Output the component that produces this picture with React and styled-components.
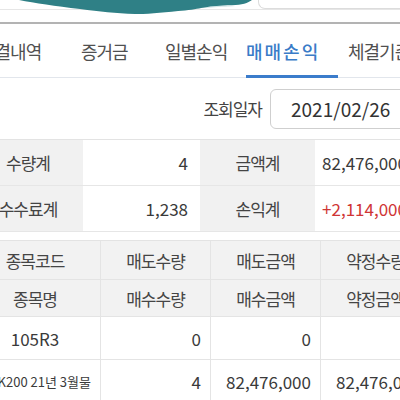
import React from 'react';
import styled, { createGlobalStyle } from 'styled-components';

const GlobalStyle = createGlobalStyle`
  html, body {
    margin: 0;
    padding: 0;
    background: #fff;
  }
  body {
    font-family: "Noto Sans CJK KR", "Noto Sans", sans-serif;
    color: #3a3a3a;
  }
`;

const Page = styled.div`
  width: 400px;
  height: 400px;
  overflow: hidden;
  background: #fff;
`;

const TopStrip = styled.div`
  display: flex;
  align-items: flex-start;
  height: 22px;
  border-bottom: 2px solid #b3b3b3;
  background: linear-gradient(to bottom, #fff 9px, #e6e6e6 9px, #e6e6e6 10px, #fff 10px);
`;

const SearchBox = styled.div`
  flex: 1;
  height: 8px;
  background: #fff;
  border: 1px solid #dcdcdc;
  border-top: none;
  border-right: none;
  border-bottom-left-radius: 7px;
`;

const TabRow = styled.div`
  display: grid;
  grid-template-columns: 102px 84px 81px 102px 80px;
  height: 53px;
  margin-left: -21px;
  border-bottom: 1px solid #e2e6ec;
`;

const Tab = styled.div`
  position: relative;
  display: flex;
  align-items: center;
  white-space: nowrap;
  font-size: 18px;
  color: ${(p) => (p.active ? '#3a7cc8' : '#505050')};
  font-weight: ${(p) => (p.active ? 500 : 400)};
  letter-spacing: ${(p) => (p.active ? '2px' : '-1px')};

  &::after {
    content: '';
    display: ${(p) => (p.active ? 'block' : 'none')};
    position: absolute;
    left: 0;
    bottom: -1px;
    width: 92px;
    height: 3px;
    background: #3b7ccb;
  }
`;

const DateRow = styled.div`
  display: flex;
  align-items: center;
  justify-content: flex-end;
  height: 61px;
  margin-right: -20px;
`;

const DateLabel = styled.span`
  font-size: 17px;
  letter-spacing: -1px;
  color: #444;
  margin-right: 8px;
`;

const DateBox = styled.div`
  display: flex;
  align-items: center;
  width: 128px;
  height: 38px;
  padding-left: 20px;
  border: 1px solid #cfcfcf;
  border-radius: 6px;
  font-size: 19px;
  color: #333;
`;

const SummaryTable = styled.div`
  margin-left: -27px;
  border-top: 1px solid #e3e3e3;
`;

const SummaryRow = styled.div`
  display: grid;
  grid-template-columns: 110px 117px 115px 104px;
  height: 45px;
  border-bottom: 1px solid #e6e6e6;
`;

const LabelCell = styled.div`
  display: flex;
  align-items: center;
  justify-content: center;
  background: #f1f1f1;
  font-size: 17px;
  letter-spacing: -1px;
  color: #444;
  white-space: nowrap;
`;

const ValueCell = styled.div`
  display: flex;
  align-items: center;
  justify-content: flex-end;
  padding-right: 12px;
  font-size: 17px;
  color: ${(p) => (p.tone === 'up' ? '#cf3535' : '#3a3a3a')};
  white-space: nowrap;
`;

const ListTable = styled.div`
  margin-top: 8px;
  margin-left: -30px;
  border-top: 1px solid #e3e3e3;
`;

const ListRow = styled.div`
  display: grid;
  grid-template-columns: 130px 110px 110px 110px;
  height: ${(p) => p.h}px;
  background: ${(p) => (p.head ? '#f2f2f2' : '#fff')};
  border-bottom: 1px solid #e4e4e4;
`;

const Cell = styled.div`
  display: flex;
  align-items: center;
  justify-content: ${(p) => p.align || 'center'};
  padding-right: ${(p) => (p.align === 'flex-end' ? '9px' : '0')};
  font-size: ${(p) => p.size || 17}px;
  letter-spacing: ${(p) => (p.head ? '-1px' : '0')};
  color: ${(p) => (p.head ? '#454545' : '#3a3a3a')};
  white-space: nowrap;

  & + & {
    border-left: 1px solid #e4e4e4;
  }
`;

const Blob = () => (
  <svg width="258" height="16" viewBox="0 0 258 16" style={{ flex: 'none' }}>
    <path
      d="M19 0 C 35 3, 55 6, 80 9 C 100 11.5, 115 13.5, 135 14 C 150 14.3, 165 12, 185 10.5 C 195 9.5, 200 8, 205 7.5 C 212 6, 220 5.5, 232 5.2 C 242 5, 248 3, 252 0 Z"
      fill="#2f8086"
    />
    <path d="M205 7.2 C 215 5.8, 225 6.5, 235 6 C 230 6.8, 215 7, 205 7.6 Z" fill="#8cc0c2" opacity="0.6" />
  </svg>
);

const tabs = ['체결내역', '증거금', '일별손익', '매매손익', '체결기준'];

export default function App() {
  return (
    <Page>
      <GlobalStyle />
      <TopStrip>
        <Blob />
        <SearchBox />
      </TopStrip>

      <TabRow>
        {tabs.map((t) => (
          <Tab key={t} active={t === '매매손익'}>
            {t}
          </Tab>
        ))}
      </TabRow>

      <DateRow>
        <DateLabel>조회일자</DateLabel>
        <DateBox>2021/02/26</DateBox>
      </DateRow>

      {/* 합계 */}
      <SummaryTable>
        <SummaryRow>
          <LabelCell>수량계</LabelCell>
          <ValueCell>4</ValueCell>
          <LabelCell>금액계</LabelCell>
          <ValueCell>82,476,000</ValueCell>
        </SummaryRow>
        <SummaryRow>
          <LabelCell>수수료계</LabelCell>
          <ValueCell>1,238</ValueCell>
          <LabelCell>손익계</LabelCell>
          <ValueCell tone="up">+2,114,000</ValueCell>
        </SummaryRow>
      </SummaryTable>

      {/* 종목별 */}
      <ListTable>
        <ListRow head h={38}>
          <Cell head>종목코드</Cell>
          <Cell head>매도수량</Cell>
          <Cell head>매도금액</Cell>
          <Cell head>약정수량</Cell>
        </ListRow>
        <ListRow head h={36}>
          <Cell head>종목명</Cell>
          <Cell head>매수수량</Cell>
          <Cell head>매수금액</Cell>
          <Cell head>약정금액</Cell>
        </ListRow>
        <ListRow h={42}>
          <Cell>105R3</Cell>
          <Cell align="flex-end">0</Cell>
          <Cell align="flex-end">0</Cell>
          <Cell align="flex-end">4</Cell>
        </ListRow>
        <ListRow h={42}>
          <Cell align="flex-end" size={13}>K200 21년 3월물</Cell>
          <Cell align="flex-end">4</Cell>
          <Cell align="flex-end">82,476,000</Cell>
          <Cell align="flex-end">82,476,000</Cell>
        </ListRow>
      </ListTable>
    </Page>
  );
}
